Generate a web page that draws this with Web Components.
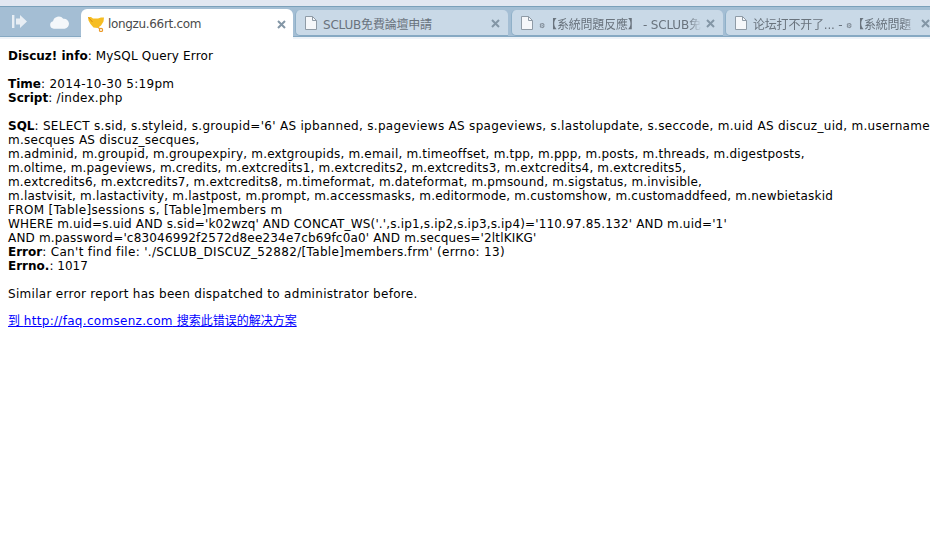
<!DOCTYPE html>
<html><head><meta charset="utf-8">
<style>
html,body{margin:0;padding:0;background:#fff;overflow:hidden}
body{width:930px;height:533px;overflow:hidden}
</style></head><body>
<browser-tabs>
<tab-item active w="212" gap="0"><span>longzu.66rt.com</span></tab-item>
<tab-item w="213" gap="2">SCLUB免費論壇申請</tab-item>
<tab-item w="212" gap="3" fade><span style="font-size:7px;vertical-align:1px">⚙</span>【系統問題反應】 - SCLUB免</tab-item>
<tab-item w="213" gap="2" fade>论坛打不开了... - <span style="font-size:7px;vertical-align:1px">⚙</span>【系統問題</tab-item>
</browser-tabs>
<error-page></error-page>
<script>
class BrowserTabs extends HTMLElement{constructor(){super();this.attachShadow({mode:'open'}).innerHTML=`<style>
:host{display:flex;flex-direction:column;height:39px;background:#e2e7f1;box-sizing:border-box;padding-top:6px;overflow:hidden}
.bar{flex:none;display:flex;height:31px;background:#a4bed4;border-top:1px solid #7ba0ba;border-bottom:1px solid #86a9c3;box-sizing:border-box;position:relative;z-index:1}
.side{width:81px;flex:none;display:flex;align-items:center;gap:22px;padding:1px 0 0 12px;box-sizing:border-box}
.tabs{display:flex;flex:1;min-width:0;align-items:flex-start}
.under{height:2px;background:#eef3f8}
</style>
<div class="bar"><div class="side">
<svg width="16" height="14" viewBox="0 0 16 14" style="flex:none"><rect x="0" y="0" width="2.4" height="13" fill="#e8eef4"/><path d="M4 3.500h4V0l7 6.500-7 6.500V9.500H4z" fill="#e8eef4"/></svg>
<svg width="19" height="14" viewBox="0 0 20 14" style="flex:none"><path d="M4 14a3.900 3.900 0 0 1-.8-7.700A6 6 0 0 1 14 3.700 5.200 5.200 0 0 1 15.500 14z" fill="#f4f7fa"/></svg>
</div><div class="tabs"><slot></slot></div></div><div class="under"></div>`}}
class TabItem extends HTMLElement{constructor(){super();const a=this.hasAttribute('active'),f=this.hasAttribute('fade');const w=this.getAttribute('w'),g=this.getAttribute('gap');
const icon=a?`<svg width="16" height="16" viewBox="0 0 16 16" style="flex:none"><rect width="16" height="16" fill="#fff"/><path d="M0 1h3l2 1.500h5l3-1h3l-.5 4-2.500 4-3.500 2.500-4-.5-3-3.500-2-3.500z" fill="#f6bd22"/><path d="M.5 1.500L4.500 6" stroke="#d98a10" fill="none"/><circle cx="13" cy="14" r="1.600" fill="#fff" stroke="#eb9a28" stroke-width="1.200"/><path d="M10 11.500l2 1.300" stroke="#eb9a28" stroke-width="1.200"/></svg>`:`<svg width="12" height="14" viewBox="0 0 12 14" style="flex:none"><path d="M.5.5h7l4 4v9h-11z" fill="#f5f7fa" stroke="#8f9ba6"/><path d="M7.500.5v4h4" fill="none" stroke="#8f9ba6"/></svg>`;
this.attachShadow({mode:'open'}).innerHTML=`<style>
:host{display:block;flex:none;box-sizing:border-box;width:${w}px;margin-left:${g}px;margin-top:${a?2:3}px;height:${a?30:26}px;${a?'margin-bottom:-3px;':''}}
.t{display:flex;align-items:center;height:100%;box-sizing:border-box;border-radius:${a?'6px 6px 0 0':'5px 5px 0 5px'};background:${a?'#fff':'#c9d9e7'};padding:${a?'0 7px 0 7px':'1px 8px 0 10px'};color:${a?'#4a4a4a':'#69737d'};white-space:nowrap;${a?'':'border-left:1px solid #8fb0c8;border-bottom:1px solid #86a9c3;padding-left:9px;'}}
.l{flex:1;min-width:0;overflow:hidden;margin:${a?'0 0 0 4px':'0 0 0 6px'};font:12px "DejaVu Sans","Noto Sans CJK TC",sans-serif;letter-spacing:${a?'-.33px':'-.2px'};${f?'-webkit-mask-image:linear-gradient(to right,#000 calc(100% - 14px),transparent);mask-image:linear-gradient(to right,#000 calc(100% - 14px),transparent);':''}}
.x{flex:none;width:9px;height:9px;margin-left:4px}
</style><div class="t">${icon}<span class="l"><slot></slot></span><svg class="x" viewBox="0 0 9 9"><path d="M1 1l7 7M8 1L1 8" stroke="#8396a6" stroke-width="2"/></svg></div>`}}
class ErrorPage extends HTMLElement{constructor(){super();this.attachShadow({mode:'open'}).innerHTML=`<style>
:host{display:block;padding:10px 8px 0;font:12px/14px "DejaVu Sans",Verdana,"Noto Sans CJK SC",sans-serif;color:#000;white-space:nowrap;height:494px;box-sizing:border-box;overflow:hidden}
p{margin:0 0 14px}
a{color:#00f}
.q{display:block}
</style>
<p><b>Discuz! info</b><span style="letter-spacing:.16px">: MySQL Query Error</span></p>
<p><b>Time</b><span style="letter-spacing:.3px">: 2014-10-30 5:19pm</span><br><b>Script</b><span style="letter-spacing:.25px">: /index.php</span></p>
<p><b>SQL</b><span style="letter-spacing:.3px">: SELECT s.sid, s.styleid, s.groupid='6' AS ipbanned, s.pageviews AS spageviews, s.lastolupdate, s.seccode, m.uid AS discuz_uid, m.username</span>
<span class="q" style="letter-spacing:.25px">m.secques AS discuz_secques,</span>
<span class="q" style="letter-spacing:.2px">m.adminid, m.groupid, m.groupexpiry, m.extgroupids, m.email, m.timeoffset, m.tpp, m.ppp, m.posts, m.threads, m.digestposts,</span>
<span class="q" style="letter-spacing:.176px">m.oltime, m.pageviews, m.credits, m.extcredits1, m.extcredits2, m.extcredits3, m.extcredits4, m.extcredits5,</span>
<span class="q" style="letter-spacing:.165px">m.extcredits6, m.extcredits7, m.extcredits8, m.timeformat, m.dateformat, m.pmsound, m.sigstatus, m.invisible,</span>
<span class="q" style="letter-spacing:.2px">m.lastvisit, m.lastactivity, m.lastpost, m.prompt, m.accessmasks, m.editormode, m.customshow, m.customaddfeed, m.newbietaskid</span>
<span class="q" style="letter-spacing:.35px">FROM [Table]sessions s, [Table]members m</span>
<span class="q" style="letter-spacing:.167px">WHERE m.uid=s.uid AND s.sid='k02wzq' AND CONCAT_WS('.',s.ip1,s.ip2,s.ip3,s.ip4)='110.97.85.132' AND m.uid='1'</span>
<span class="q" style="letter-spacing:.175px">AND m.password='c83046992f2572d8ee234e7cb69fc0a0' AND m.secques='2ltlKIKG'</span>
<span class="q"><b>Error</b><span style="letter-spacing:.33px">: Can't find file: './SCLUB_DISCUZ_52882/[Table]members.frm' (errno: 13)</span></span>
<span class="q"><b>Errno.</b>: 1017</span></p>
<p style="letter-spacing:.29px;margin-bottom:13px">Similar error report has been dispatched to administrator before.</p>
<p><a href="#">到 <span style="letter-spacing:.3px">http://faq.comsenz.com</span> 搜索此错误的解决方案</a></p>`}}
customElements.define('browser-tabs',BrowserTabs);customElements.define('tab-item',TabItem);customElements.define('error-page',ErrorPage);
</script>
</body></html>
